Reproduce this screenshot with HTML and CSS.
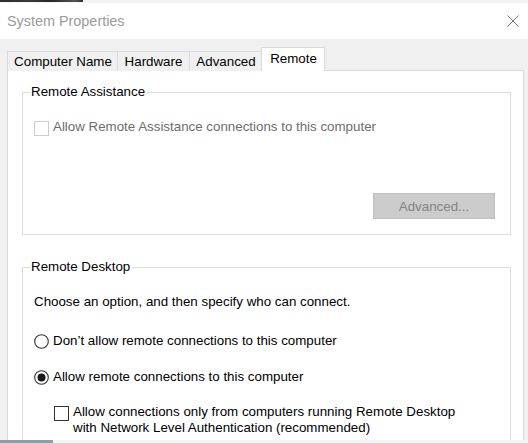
FILE: index.html
```html
<!DOCTYPE html>
<html lang="en">
<head>
<meta charset="utf-8">
<title>System Properties</title>
<link rel="stylesheet" href="styles.css">
</head>
<body>
<div class="window">
  <div class="topstrip"><div class="taskbit"></div></div>
  <header class="titlebar">
    <span class="title">System Properties</span>
    <svg class="close" width="12" height="12" viewBox="0 0 12 12"><path d="M0.5 0.5 L11.5 11.5 M11.5 0.5 L0.5 11.5" stroke="#7a7a7a" stroke-width="1" fill="none"/></svg>
  </header>
  <main class="body">
    <nav class="tabs">
      <div class="tab tab-cn">Computer Name</div>
      <div class="tab tab-hw">Hardware</div>
      <div class="tab tab-adv">Advanced</div>
      <div class="tab tab-active">Remote</div>
    </nav>
    <section class="panel">
      <fieldset class="group group-assist">
        <legend>Remote Assistance</legend>
        <div class="row check-row disabled">
          <span class="checkbox"></span>
          <span>Allow Remote Assistance connections to this computer</span>
        </div>
        <div class="btn-row">
          <button class="btn" disabled>Advanced...</button>
        </div>
      </fieldset>
      <fieldset class="group group-desktop">
        <legend>Remote Desktop</legend>
        <p class="intro">Choose an option, and then specify who can connect.</p>
        <div class="row radio-row first">
          <svg class="radio" width="15" height="15" viewBox="0 0 15 15"><circle cx="7.5" cy="7.5" r="6.8" fill="#fff" stroke="#333" stroke-width="1.1"/></svg>
          <span>Don’t allow remote connections to this computer</span>
        </div>
        <div class="row radio-row second">
          <svg class="radio" width="15" height="15" viewBox="0 0 15 15"><circle cx="7.5" cy="7.5" r="6.8" fill="#fff" stroke="#333" stroke-width="1.1"/><circle cx="7.5" cy="7.5" r="4" fill="#1a1a1a"/></svg>
          <span>Allow remote connections to this computer</span>
        </div>
        <div class="row check-row nla">
          <span class="checkbox dark"></span>
          <span>Allow connections only from computers running Remote Desktop<br>with Network Level Authentication (recommended)</span>
        </div>
      </fieldset>
    </section>
  </main>
  <div class="bottomstrip"><div class="bottombit"></div></div>
</div>
</body>
</html>
```

FILE: styles.css
```css
* { box-sizing: border-box; }
html, body { margin: 0; padding: 0; }
body {
  font-family: "Liberation Sans", Arial, sans-serif;
  font-size: 13.33px;
  color: #000;
  background: #f0f0f0;
}
.window {
  width: 528px;
  height: 443px;
  overflow: hidden;
  display: flex;
  flex-direction: column;
}
.topstrip {
  height: 3px;
  background: #f3f3f3;
  flex: none;
}
.taskbit {
  width: 83px;
  height: 2px;
  background: linear-gradient(90deg, #2d2d2d 0%, #3a3a3a 40%, #262626 60%, #555 90%, #333 100%);
}
.titlebar {
  height: 36px;
  flex: none;
  background: #fff;
  display: flex;
  align-items: center;
  justify-content: space-between;
  padding: 0 9px 0 7px;
}
.title {
  font-size: 14.4px;
  color: #9a9a9a;
}
.close { display: block; }
.body {
  flex: none;
  height: 401px;
  overflow: hidden;
  padding: 8px 0 0 7px;
  background: #f0f0f0;
}
.tabs {
  display: flex;
  align-items: flex-end;
  height: 24px;
  margin-bottom: -1px;
  position: relative;
  z-index: 1;
}
.tab {
  height: 20px;
  line-height: 20px;
  border: 1px solid #d9d9d9;
  border-bottom: none;
  border-right: none;
  background: #f0f0f0;
  text-align: center;
  white-space: nowrap;
  overflow: hidden;
}
.tab-cn { width: 110px; padding-left: 1px; }
.tab-hw { width: 72px; }
.tab-adv { width: 72px; padding-left: 1px; }
.tab-active {
  width: 64px;
  height: 24px;
  line-height: 21px;
  background: #fff;
  border-right: 1px solid #d9d9d9;
  padding-left: 1px;
}
.panel {
  width: 517px;
  height: 380px;
  background: #fff;
  border: 1px solid #d9d9d9;
  border-bottom: none;
  padding: 13px 12px 0 14px;
}
.group {
  margin: 0;
  padding: 0 14px 0 11px;
  border: 1px solid #dcdcdc;
  min-width: 0;
}
.group legend {
  margin-left: -4px;
  padding: 0 2px 0 1px;
  line-height: 16px;
}
.row {
  display: flex;
  align-items: flex-start;
  line-height: 16px;
}
.checkbox {
  width: 15px;
  height: 15px;
  border: 1px solid #cccccc;
  background: #fff;
  flex: none;
  margin-top: 2px;
  margin-right: 4px;
}
.checkbox.dark { border-color: #333; }
.disabled { color: #6d6d6d; }
.group-assist .check-row { margin-top: 19px; }
.btn-row {
  display: flex;
  justify-content: flex-end;
  margin-top: 57px;
  padding-bottom: 15px;
  margin-right: 1px;
}
.btn {
  width: 122px;
  height: 26px;
  background: #cccccc;
  border: 1px solid #bfbfbf;
  color: #838383;
  font-family: "Liberation Sans", Arial, sans-serif;
  font-size: 13.33px;
  padding: 0;
}
.group-desktop { margin-top: 24px; padding-bottom: 30px; }
.intro {
  margin: 19px 0 0;
  line-height: 16px;
}
.radio {
  flex: none;
  margin-top: 1px;
  margin-right: 4px;
  display: block;
}
.radio-row.first { margin-top: 23px; }
.radio-row.second { margin-top: 20px; }
.nla { margin-top: 19px; padding-left: 20px; }
.bottomstrip {
  height: 3px;
  flex: none;
  background: #f4f4f4;
}
.bottombit {
  width: 53px;
  height: 3px;
  background: #8d9fa3;
}
```
